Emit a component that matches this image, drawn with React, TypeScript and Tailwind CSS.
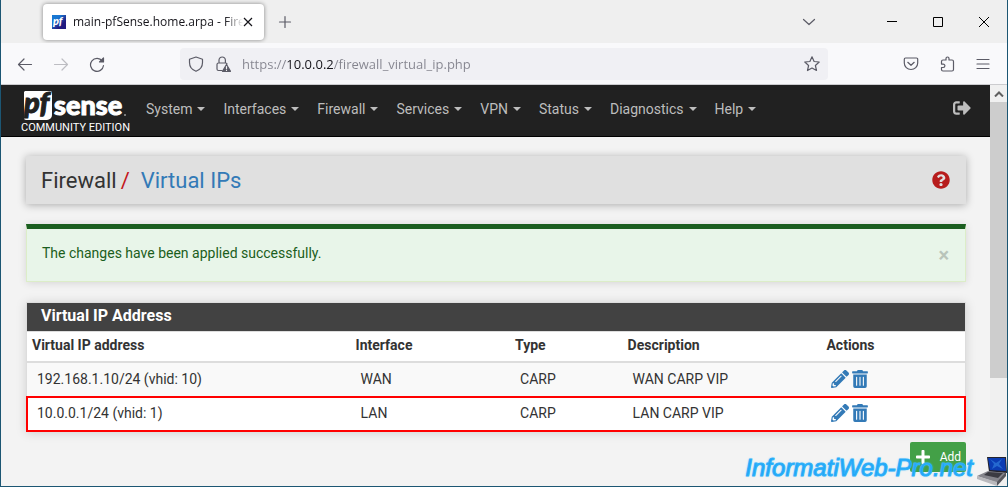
import type { ReactNode } from "react";
import { FaPencilAlt, FaPlus, FaQuestionCircle, FaSignOutAlt, FaTrashAlt } from "react-icons/fa";

const menus = ["System", "Interfaces", "Firewall", "Services", "VPN", "Status", "Diagnostics", "Help"];

const vips = [
    { address: "192.168.1.10/24 (vhid: 10)", iface: "WAN", type: "CARP", descr: "WAN CARP VIP" },
    { address: "10.0.0.1/24 (vhid: 1)", iface: "LAN", type: "CARP", descr: "LAN CARP VIP", selected: true },
];

function Glyph({ children, className = "" }: { children: ReactNode; className?: string }) {
    return (
        <svg
            viewBox="0 0 16 16"
            className={`size-4 shrink-0 ${className}`}
            fill="none"
            stroke="currentColor"
            strokeWidth="1.2"
            strokeLinecap="round"
            strokeLinejoin="round"
            aria-hidden="true"
        >
            {children}
        </svg>
    );
}

function ToolButton({ label, children, disabled }: { label: string; children: ReactNode; disabled?: boolean }) {
    return (
        <button
            type="button"
            aria-label={label}
            disabled={disabled}
            className="flex h-8 w-9 shrink-0 items-center justify-center text-[#5b5b66] disabled:text-[#bdbdc2]"
        >
            <Glyph>{children}</Glyph>
        </button>
    );
}

function WindowButton({ label, children }: { label: string; children: ReactNode }) {
    return (
        <button type="button" aria-label={label} className="flex h-8 w-[46px] shrink-0 items-center justify-center text-black">
            <svg viewBox="0 0 10 10" className="size-[10px]" fill="none" stroke="currentColor" aria-hidden="true">
                {children}
            </svg>
        </button>
    );
}

function TabStrip() {
    return (
        <div className="flex h-[43px] items-start bg-[#efefef]">
            <div className="mt-1 ml-[42px] flex h-9 w-[221px] items-center rounded bg-white pr-[11px] pl-[9px] shadow-[0_0_4px_rgba(0,0,0,0.45)]">
                <svg viewBox="0 0 14 14" className="size-[14px] shrink-0" aria-hidden="true">
                    <defs>
                        <linearGradient id="favicon" x1="0" y1="0" x2="1" y2="1">
                            <stop offset="0.3" stopColor="#1877d2" />
                            <stop offset="0.7" stopColor="#211a80" />
                        </linearGradient>
                    </defs>
                    <rect width="14" height="14" fill="url(#favicon)" />
                    <text x="1" y="10" fill="#fff" fontSize="11" fontWeight="900" fontStyle="italic" fontFamily="Lato, sans-serif">
                        pf
                    </text>
                </svg>
                <span className="ml-[7px] min-w-0 flex-1 overflow-hidden text-xs whitespace-nowrap text-[#15141a] [mask-image:linear-gradient(to_left,transparent,black_18px)]">
                    main-pfSense.home.arpa - Firewall
                </span>
                <button type="button" aria-label="Close tab" className="text-[#15141a]">
                    <svg viewBox="0 0 10 10" className="size-[10px]" fill="none" stroke="currentColor" strokeWidth="1.2" aria-hidden="true">
                        <path d="M1 1l8 8M9 1l-8 8" />
                    </svg>
                </button>
            </div>
            <div className="mt-[6px] ml-[3px] flex">
                <ToolButton label="New tab">
                    <path d="M8 2.5v11M2.5 8h11" />
                </ToolButton>
            </div>
            <div className="mt-[6px] ml-auto flex">
                <ToolButton label="List all tabs">
                    <path d="M2.5 5.5L8 10.5l5.5-5" />
                </ToolButton>
            </div>
            <div className="mt-[6px] ml-[42px] flex">
                <WindowButton label="Minimize">
                    <path d="M0 4.5h10" />
                </WindowButton>
                <WindowButton label="Maximize">
                    <path d="M.5 .5h9v9h-9z" />
                </WindowButton>
                <WindowButton label="Close window">
                    <path d="M0 0l10 10M10 0L0 10" />
                </WindowButton>
            </div>
        </div>
    );
}

function AddressBar() {
    return (
        <div className="flex h-[42px] items-center border-b border-[#cccccf] bg-[#f9f9fb] px-[6px]">
            <ToolButton label="Back">
                <path d="M14.5 8.500H1.500M7 3L1.500 8.500 7 14" />
            </ToolButton>
            <ToolButton label="Forward" disabled>
                <path d="M1.500 8.500h13M9 3l5.500 5.500L9 14" />
            </ToolButton>
            <ToolButton label="Reload">
                <path d="M13.300 5A6.500 6.500 0 1 0 14.500 9.500" />
                <path d="M14.500 2v4h-4z" fill="currentColor" />
            </ToolButton>

            <div className="mx-[65px] flex h-8 min-w-0 flex-1 items-center rounded bg-[#f0f0f4] px-2 text-[#5b5b66]">
                <Glyph>
                    <path d="M8 1l6.500 2.300v3.200C14.500 11 12 13.800 8 15.300 4 13.800 1.500 11 1.500 6.500V3.300z" />
                </Glyph>
                <Glyph className="ml-[11px]">
                    <path d="M4 7V4.200a3.200 3.200 0 0 1 6.400 0V7M7 14.500H3.500a1.500 1.500 0 0 1-1.500-1.500V8.500A1.500 1.500 0 0 1 3.500 7h7a1.500 1.500 0 0 1 1.500 1" />
                    <path d="M11.500 8.500l4 6.800h-8z" fill="currentColor" />
                    <path d="M11.500 10.500v2.200M11.500 14.300v.1" stroke="#f0f0f4" />
                </Glyph>
                <input
                    type="text"
                    aria-label="Address"
                    defaultValue="https://10.0.0.2/firewall_virtual_ip.php"
                    className="ml-[11px] min-w-0 flex-1 bg-[linear-gradient(to_right,#84848e_44px,#15141a_44px,#15141a_91px,#84848e_91px)] bg-clip-text pt-[2px] text-[13px] text-transparent caret-black outline-none"
                />
                <button type="button" aria-label="Bookmark this page">
                    <Glyph>
                        <path d="M8 .8l2.100 4.700 5.100.5-3.800 3.500 1.100 5L8 12l-4.500 2.500 1.100-5L.8 6l5.100-.5z" />
                    </Glyph>
                </button>
            </div>

            <ToolButton label="Save to Pocket">
                <path d="M2.500 2h11a1.200 1.200 0 0 1 1.200 1.200V7a6.700 6.500 0 0 1-13.400 0V3.200A1.200 1.200 0 0 1 2.500 2z" />
                <path d="M4.800 6.300L8 9.300l3.200-3" />
            </ToolButton>
            <ToolButton label="Extensions">
                <path d="M2.500 5.500q0-1.500 1.500-1.500h3V2.500a1.500 1.500 0 0 1 3 0V4h3q1.500 0 1.500 1.500v8q0 1.500-1.500 1.500H4q-1.500 0-1.500-1.500v-2h1.700a1.700 1.700 0 0 0 0-3.400H2.500z" />
            </ToolButton>
            <ToolButton label="Open menu">
                <path d="M2 3.500h12M2 8h12M2 12.500h12" />
            </ToolButton>
        </div>
    );
}

function Logo() {
    return (
        <a href="#" aria-label="pfSense home" className="flex shrink-0 flex-col pt-1 text-white">
            <svg viewBox="0 0 106 31" className="h-[31px] w-[106px] overflow-visible" fontFamily="Lato, sans-serif" fontWeight="900">
                <path d="M4 1h25a2 2 0 0 1 2 2v22a5 5 0 0 1-5 5H5a2 2 0 0 1-2-2V2z" fill="#fff" />
                <text x="3" y="23" fontSize="29" fontStyle="italic" fill="#212121" stroke="#212121" strokeWidth="1">pf</text>
                <text x="33" y="25" fontSize="27" fill="#fff" stroke="#fff" strokeWidth="1">sense</text>
                <circle cx="104" cy="25" r="1" fill="#999" />
            </svg>
            <span className="text-[11px] leading-[14px] whitespace-nowrap">COMMUNITY EDITION</span>
        </a>
    );
}

function NavBar() {
    return (
        <nav className="flex h-[52px] items-center border-b border-black bg-[#212121] pr-[19px] pl-5 text-[#bdbdbd]">
            <div className="w-[106px] shrink-0">
                <Logo />
            </div>
            <ul className="mb-1 ml-[19px] flex gap-[18px]">
                {menus.map((menu) => (
                    <li key={menu}>
                        <button type="button" className="flex items-center gap-[5px] text-sm">
                            {menu}
                            <svg viewBox="0 0 8 4" className="h-1 w-2" fill="currentColor" aria-hidden="true">
                                <path d="M0 0h8L4 4z" />
                            </svg>
                        </button>
                    </li>
                ))}
            </ul>
            <button type="button" aria-label="Logout" className="mb-[6px] ml-auto">
                <FaSignOutAlt className="size-[18px]" />
            </button>
        </nav>
    );
}

function VipTable() {
    return (
        <section className="mt-5 border border-[#ddd] bg-white shadow-[0_1px_10px_rgba(0,0,0,0.15)]">
            <h2 className="bg-[#424242] px-[14px] pt-px pb-[3px] text-base font-bold text-white">Virtual IP Address</h2>
            <table className="w-full table-fixed border-collapse border-t border-[#ddd] text-left text-sm">
                <thead>
                    <tr className="border-b-2 border-[#ddd]">
                        <th className="w-[34.5%] px-[5px] pt-[3px] pb-[6px] font-bold">Virtual IP address</th>
                        <th className="w-[17%] px-[5px] pt-[3px] pb-[6px] font-bold">Interface</th>
                        <th className="w-[12%] px-[5px] pt-[3px] pb-[6px] font-bold">Type</th>
                        <th className="w-[21.2%] px-[5px] pt-[3px] pb-[6px] font-bold">Description</th>
                        <th className="px-[5px] pt-[3px] pb-[6px] font-bold">Actions</th>
                    </tr>
                </thead>
                <tbody>
                    {vips.map((vip) => (
                        <tr
                            key={vip.address}
                            className={vip.selected ? "bg-white outline-2 -outline-offset-1 outline-[#f00]" : "bg-[#f9f9f9]"}
                        >
                            <td className="px-[10px] pt-[6px] pb-2">{vip.address}</td>
                            <td className="px-[10px] pt-[6px] pb-2">{vip.iface}</td>
                            <td className="px-[10px] pt-[6px] pb-2">{vip.type}</td>
                            <td className="px-[10px] pt-[6px] pb-2">{vip.descr}</td>
                            <td className="px-[10px] pt-[6px] pb-2">
                                <div className="flex gap-[3px] text-[#337ab7]">
                                    <a href="#" aria-label="Edit virtual ip">
                                        <FaPencilAlt className="size-[18px]" />
                                    </a>
                                    <a href="#" aria-label="Delete virtual ip">
                                        <FaTrashAlt className="h-[18px] w-4" />
                                    </a>
                                </div>
                            </td>
                        </tr>
                    ))}
                </tbody>
            </table>
        </section>
    );
}

function ScrollBar() {
    return (
        <div className="flex w-[17px] shrink-0 flex-col bg-[#f0f0f0]">
            <div className="flex h-[17px] items-center justify-center text-[#606060]">
                <svg viewBox="0 0 10 6" className="h-[6px] w-[10px]" fill="none" stroke="currentColor" strokeWidth="2" aria-hidden="true">
                    <path d="M1 5.500L5 1.500l4 4" />
                </svg>
            </div>
            <div className="grow-[276] bg-[#cdcdcd]" />
            <div className="grow-[108]" />
        </div>
    );
}

function Watermark() {
    return (
        <div className="pointer-events-none absolute right-0 bottom-0 flex items-end">
            <span className="mr-[3px] mb-1 font-['Liberation_Sans',sans-serif] text-2xl leading-7 whitespace-nowrap text-[#1fa5f5] italic [-webkit-text-stroke:1px_#2eb0fa] [text-shadow:0_0_2px_#5cc8ff]">
                InformatiWeb-Pro.net
            </span>
            <svg viewBox="0 0 31 30" className="h-[30px] w-[31px]" aria-hidden="true">
                <path d="M11 1h19l1 16-18-1z" fill="#23232d" />
                <path d="M12 2h17l1 13-16-1z" fill="#0b3cb4" />
                <path d="M14 3l6 4 6-4-3 5 4 5-6-3-5 3 2-5z" fill="#2468d0" />
                <path d="M12 15l18 2-8 10L1 20z" fill="#85858c" />
                <path d="M12 16l15 1-5 5-14-3z" fill="#3b3b42" />
                <path d="M1 20l20 6v4L1 23z" fill="#b9b9bd" />
                <path d="M21 26l9-10v4l-9 10z" fill="#56565c" />
            </svg>
        </div>
    );
}

export default function App() {
    return (
        <div className="relative flex min-h-screen flex-col border-x border-b border-[#1c5673] bg-[#f3f3f3] font-['Open_Sans','Noto_Sans',sans-serif]">
            <TabStrip />
            <AddressBar />
            <div className="flex flex-1 font-[Roboto,sans-serif] text-[#333]">
                <div className="min-w-0 flex-1">
                    <NavBar />
                    <main className="pt-[19px] pr-6 pb-[14px] pl-[25px]">
                        <header className="flex h-12 items-center bg-[#e0e0e0] pr-4 pl-[15px] shadow-[0_1px_8px_rgba(0,0,0,0.3)]">
                            <h1 className="flex text-[22px]">
                                Firewall
                                <span className="mr-[11px] ml-1 text-[#c4161c]">/</span>
                                <a href="#" className="text-[#337ab7]">Virtual IPs</a>
                            </h1>
                            <a href="#" aria-label="Help for this page" className="ml-auto text-[#b71c1c]">
                                <FaQuestionCircle className="size-[18px]" />
                            </a>
                        </header>

                        <div
                            role="alert"
                            className="mt-5 flex items-center border border-t-[5px] border-[#dcedc8] border-t-[#1b5e20] bg-[#e8f5e9] py-[14px] pr-4 pl-[15px] text-sm text-[#1b5e20] shadow-[0_1px_8px_rgba(0,0,0,0.12)]"
                        >
                            <span className="pb-1">The changes have been applied successfully.</span>
                            <button type="button" aria-label="Close" className="ml-auto text-xl leading-[23px] font-bold text-[#b9c4ba]">
                                ×
                            </button>
                        </div>

                        <VipTable />

                        <div className="mt-[10px] flex justify-end">
                            <button type="button" className="flex h-[30px] items-center gap-[9px] rounded-xs bg-[#43a047] px-[5px] text-xs text-white">
                                <FaPlus className="size-4" />
                                Add
                            </button>
                        </div>
                    </main>
                </div>
                <ScrollBar />
            </div>
            <Watermark />
        </div>
    );
}
